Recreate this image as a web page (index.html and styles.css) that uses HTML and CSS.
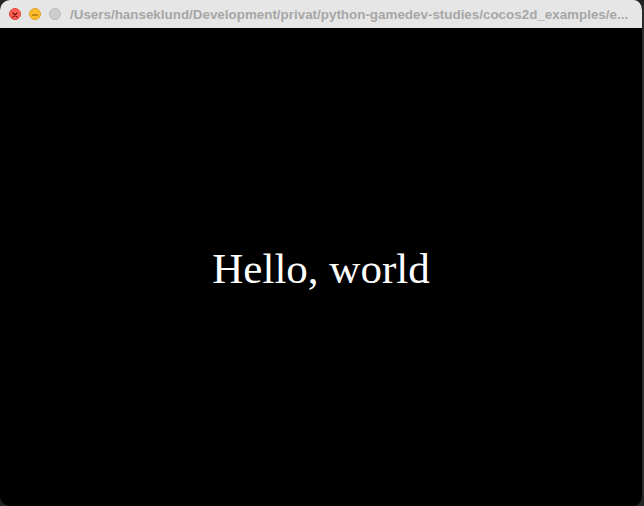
FILE: index.html
```html
<!DOCTYPE html>
<html>
<head>
<meta charset="utf-8">
<link rel="stylesheet" href="styles.css">
</head>
<body>
<div class="window">
  <div class="titlebar">
    <div class="lights">
      <span class="light close">
        <svg width="12" height="12" viewBox="0 0 12 12"><path d="M3.6 3.6 L8.4 8.4 M8.4 3.6 L3.6 8.4" stroke="#6b0d08" stroke-width="1.3" stroke-linecap="round"/></svg>
      </span>
      <span class="light min">
        <svg width="12" height="12" viewBox="0 0 12 12"><path d="M3 6 H9" stroke="#8a5a00" stroke-width="1.4" stroke-linecap="round"/></svg>
      </span>
      <span class="light zoom"></span>
    </div>
    <div class="title">/Users/hanseklund/Development/privat/python-gamedev-studies/cocos2d_examples/e...</div>
  </div>
  <div class="content">
    <div class="hello">Hello, world</div>
  </div>
</div>
</body>
</html>
```
FILE: styles.css
```css
html, body {
  margin: 0;
  padding: 0;
  width: 644px;
  height: 506px;
  background: #232323;
  overflow: hidden;
}
.window {
  width: 644px;
  height: 506px;
  box-sizing: border-box;
  border-radius: 10px;
  overflow: hidden;
  display: flex;
  flex-direction: column;
  background: #000;
  border-right: 2px solid #2a2a2a;
}
.titlebar {
  height: 28px;
  flex: none;
  background: #e6e6e6;
  display: flex;
  align-items: center;
  padding-left: 9px;
  gap: 9px;
}
.lights {
  display: flex;
  gap: 8px;
}
.light {
  width: 12px;
  height: 12px;
  border-radius: 50%;
  box-sizing: border-box;
  display: flex;
}
.close { background: #fe5f57; border: 0.5px solid #e2443b; }
.min { background: #febc2e; border: 0.5px solid #dea123; }
.zoom { background: #cdcdcd; border: 0.5px solid #b9b9b9; }
.title {
  font-family: "Liberation Sans", Arial, sans-serif;
  font-weight: bold;
  font-size: 13.4px;
  color: #a6a6a6;
  white-space: nowrap;
}
.content {
  flex: 1;
  display: flex;
  align-items: center;
  justify-content: center;
}
.hello {
  font-family: "Liberation Serif", "Times New Roman", serif;
  font-size: 43px;
  color: #fff;
  margin-top: 3px;
}
```
